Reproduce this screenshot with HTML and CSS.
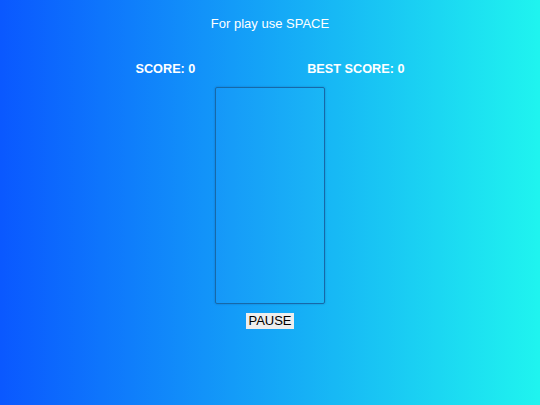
FILE: index.html
```html
<!DOCTYPE html>
<html>
<head>
<meta charset="utf-8">
<link rel="stylesheet" href="styles.css">
</head>
<body>
<div class="page">
  <p class="hint">For play use SPACE</p>
  <div class="scores">
    <span class="score">SCORE: 0</span>
    <span class="score">BEST SCORE: 0</span>
  </div>
  <div class="board"></div>
  <button class="pause">PAUSE</button>
</div>
</body>
</html>
```

FILE: styles.css
```css
html, body {
  margin: 0;
  padding: 0;
}
body {
  width: 540px;
  height: 405px;
  background: linear-gradient(to right, #0a58ff 0%, #1ff4ef 100%);
  font-family: "Liberation Sans", Arial, sans-serif;
  color: #fff;
  overflow: hidden;
}
.page {
  display: flex;
  flex-direction: column;
  align-items: center;
}
.hint {
  margin: 16px 0 0;
  font-size: 13px;
  line-height: 15px;
}
.scores {
  width: 269px;
  display: flex;
  justify-content: space-between;
  margin-top: 31px;
}
.score {
  font-weight: bold;
  font-size: 12.7px;
  line-height: 15px;
}
.board {
  width: 108px;
  height: 215px;
  margin-top: 10px;
  border: 1px solid #1768a8;
  border-radius: 2px;
  background: rgba(255, 255, 255, 0.015);
  box-shadow: 0 0 2px rgba(0, 40, 90, 0.35);
}
.pause {
  margin-top: 9px;
  width: 48px;
  height: 16px;
  padding: 0;
  border: none;
  background: #eeeeee;
  color: #000;
  font-family: "Liberation Sans", Arial, sans-serif;
  font-size: 13px;
  line-height: 16px;
}
```
